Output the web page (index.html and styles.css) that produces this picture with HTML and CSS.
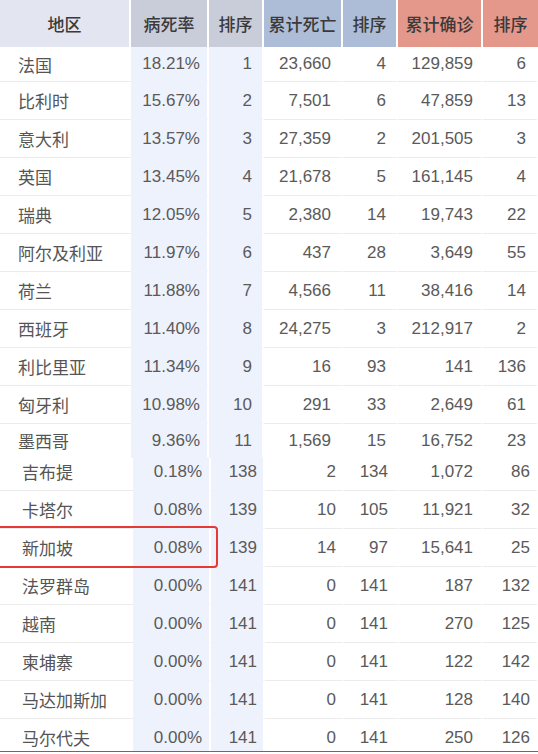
FILE: index.html
```html
<!DOCTYPE html>
<html lang="zh">
<head>
<meta charset="utf-8">
<link rel="stylesheet" href="styles.css">
</head>
<body>
<div class="page">
  <div class="sheet top">
    <div class="row head">
      <div class="th h-area">地区</div>
      <div class="th h-rate">病死率</div>
      <div class="th h-rate">排序</div>
      <div class="th h-death">累计死亡</div>
      <div class="th h-death">排序</div>
      <div class="th h-conf">累计确诊</div>
      <div class="th h-conf">排序</div>
    </div>
    <div class="row first"><div class="td name">法国</div><div class="td blue">18.21%</div><div class="td blue">1</div><div class="td">23,660</div><div class="td">4</div><div class="td">129,859</div><div class="td">6</div></div>
    <div class="row"><div class="td name">比利时</div><div class="td blue">15.67%</div><div class="td blue">2</div><div class="td">7,501</div><div class="td">6</div><div class="td">47,859</div><div class="td">13</div></div>
    <div class="row"><div class="td name">意大利</div><div class="td blue">13.57%</div><div class="td blue">3</div><div class="td">27,359</div><div class="td">2</div><div class="td">201,505</div><div class="td">3</div></div>
    <div class="row"><div class="td name">英国</div><div class="td blue">13.45%</div><div class="td blue">4</div><div class="td">21,678</div><div class="td">5</div><div class="td">161,145</div><div class="td">4</div></div>
    <div class="row"><div class="td name">瑞典</div><div class="td blue">12.05%</div><div class="td blue">5</div><div class="td">2,380</div><div class="td">14</div><div class="td">19,743</div><div class="td">22</div></div>
    <div class="row"><div class="td name">阿尔及利亚</div><div class="td blue">11.97%</div><div class="td blue">6</div><div class="td">437</div><div class="td">28</div><div class="td">3,649</div><div class="td">55</div></div>
    <div class="row"><div class="td name">荷兰</div><div class="td blue">11.88%</div><div class="td blue">7</div><div class="td">4,566</div><div class="td">11</div><div class="td">38,416</div><div class="td">14</div></div>
    <div class="row"><div class="td name">西班牙</div><div class="td blue">11.40%</div><div class="td blue">8</div><div class="td">24,275</div><div class="td">3</div><div class="td">212,917</div><div class="td">2</div></div>
    <div class="row"><div class="td name">利比里亚</div><div class="td blue">11.34%</div><div class="td blue">9</div><div class="td">16</div><div class="td">93</div><div class="td">141</div><div class="td">136</div></div>
    <div class="row"><div class="td name">匈牙利</div><div class="td blue">10.98%</div><div class="td blue">10</div><div class="td">291</div><div class="td">33</div><div class="td">2,649</div><div class="td">61</div></div>
    <div class="row cut"><div class="td name">墨西哥</div><div class="td blue">9.36%</div><div class="td blue">11</div><div class="td">1,569</div><div class="td">15</div><div class="td">16,752</div><div class="td">23</div></div>
  </div>
  <div class="sheet bottom">
    <div class="row lead"><div class="td name">吉布提</div><div class="td blue">0.18%</div><div class="td blue">138</div><div class="td">2</div><div class="td">134</div><div class="td">1,072</div><div class="td">86</div></div>
    <div class="row"><div class="td name">卡塔尔</div><div class="td blue">0.08%</div><div class="td blue">139</div><div class="td">10</div><div class="td">105</div><div class="td">11,921</div><div class="td">32</div></div>
    <div class="row"><div class="td name">新加坡</div><div class="td blue">0.08%</div><div class="td blue">139</div><div class="td">14</div><div class="td">97</div><div class="td">15,641</div><div class="td">25</div></div>
    <div class="row"><div class="td name">法罗群岛</div><div class="td blue">0.00%</div><div class="td blue">141</div><div class="td">0</div><div class="td">141</div><div class="td">187</div><div class="td">132</div></div>
    <div class="row"><div class="td name">越南</div><div class="td blue">0.00%</div><div class="td blue">141</div><div class="td">0</div><div class="td">141</div><div class="td">270</div><div class="td">125</div></div>
    <div class="row"><div class="td name">柬埔寨</div><div class="td blue">0.00%</div><div class="td blue">141</div><div class="td">0</div><div class="td">141</div><div class="td">122</div><div class="td">142</div></div>
    <div class="row"><div class="td name">马达加斯加</div><div class="td blue">0.00%</div><div class="td blue">141</div><div class="td">0</div><div class="td">141</div><div class="td">128</div><div class="td">140</div></div>
    <div class="row"><div class="td name">马尔代夫</div><div class="td blue">0.00%</div><div class="td blue">141</div><div class="td">0</div><div class="td">141</div><div class="td">250</div><div class="td">126</div></div>
  </div>
  <div class="highlight"></div>
</div>
</body>
</html>
```
FILE: styles.css
```css
* { box-sizing: border-box; }
html, body { margin: 0; padding: 0; background: #fff; }
.page {
  position: relative;
  width: 538px;
  height: 754px;
  overflow: hidden;
  font-family: "Liberation Sans", "Noto Sans CJK SC", sans-serif;
  font-size: 17px;
  color: #5a5a5a;
}
.sheet { overflow: hidden; }
.top { height: 458px; }
.bottom {
  height: 294px;
  border-bottom: 1px solid #6a6a6a;
}
.row {
  display: grid;
  height: 38px;
}
.top .row { grid-template-columns: 131px 78px 55px 79px 55px 85px 55px; }
.bottom .row { grid-template-columns: 133px 78px 54px 79px 55px 84px 55px; }
.row.head { height: 47px; }
.row.first { height: 35px; }
.row.cut { height: 34px; }
.row.lead { margin-top: -5px; }

.th {
  display: flex;
  align-items: center;
  justify-content: center;
  font-family: "Noto Sans CJK SC", sans-serif;
  font-weight: 500;
  font-size: 17px;
  color: #3a3a3a;
  border-right: 2px solid #fff;
}
.th:last-child { border-right: 0; }
.h-area { background: #e3e5f0; }
.h-rate { background: #c9cdd9; }
.h-death { background: #adbdd7; }
.h-conf { background: #e4978b; }

.td {
  display: flex;
  align-items: center;
  justify-content: flex-end;
  padding-right: 10px;
  border-right: 2px solid #fff;
  border-bottom: 1px solid #ececec;
  white-space: nowrap;
}
.td.name {
  justify-content: flex-start;
  padding-left: 18px;
  padding-right: 0;
  font-family: "Noto Sans CJK SC", sans-serif;
  color: #555;
  border-right: 0;
}
.td.blue {
  background: #eef2fd;
  border-bottom-color: #eef2fd;
}
.top .td:nth-child(2) { padding-right: 7px; }
.top .td:nth-child(6) { padding-right: 8px; }
.bottom .td.name { padding-left: 22px; }
.bottom .td:nth-child(2) { padding-right: 7px; }
.bottom .td:nth-child(3) { padding-right: 6px; }
.bottom .td:nth-child(4) { padding-right: 6px; }
.bottom .td:nth-child(5) { padding-right: 9px; }
.bottom .td:nth-child(6) { padding-right: 8px; }
.bottom .td:nth-child(7) { padding-right: 6px; }
.row.cut .td { border-bottom-color: transparent; }
.row.cut .td.blue { border-bottom-color: #eef2fd; }

.highlight {
  position: absolute;
  left: -4px;
  top: 526px;
  width: 222px;
  height: 42px;
  border: 2px solid #e53935;
  border-radius: 4px;
}
```
